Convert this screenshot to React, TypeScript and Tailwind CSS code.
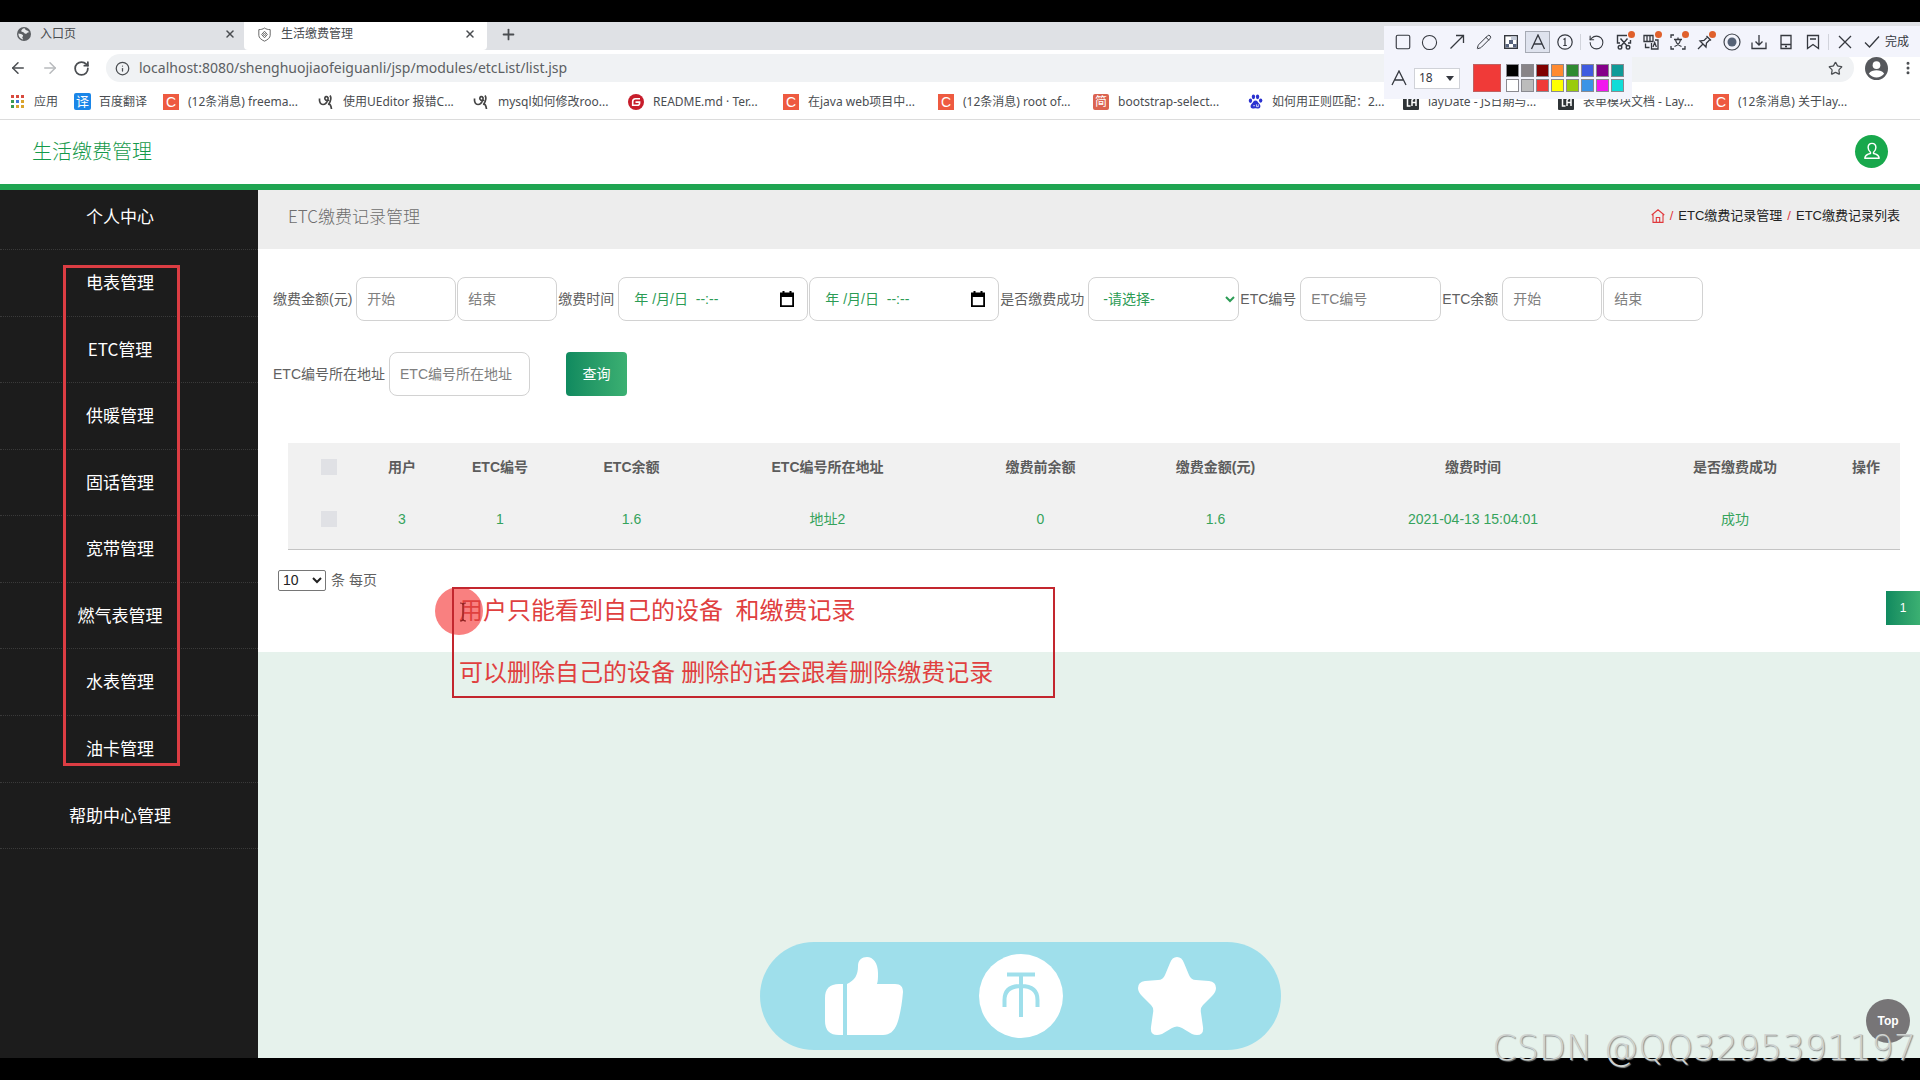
import type { ReactNode } from "react";
import {
  ArrowLeft,
  ArrowRight,
  Circle,
  Info,
  MoreVertical,
  Pencil,
  Plus,
  RotateCcw,
  RotateCw,
  Square,
  Star,
  X,
} from "lucide-react";

const uiFont = "font-['Noto_Sans','Noto_Sans_CJK_SC',sans-serif]";
const pageFont = "font-['Liberation_Sans','Noto_Sans_CJK_SC',sans-serif]";
const cjkFont = "font-['Noto_Sans_CJK_SC',sans-serif]";

const menuItems = [
  "电表管理",
  "ETC管理",
  "供暖管理",
  "固话管理",
  "宽带管理",
  "燃气表管理",
  "水表管理",
  "油卡管理",
  "帮助中心管理",
];

const columns = [
  { title: "用户", value: "3", width: 64 },
  { title: "ETC编号", value: "1", width: 132 },
  { title: "ETC余额", value: "1.6", width: 131 },
  { title: "ETC编号所在地址", value: "地址2", width: 261 },
  { title: "缴费前余额", value: "0", width: 165 },
  { title: "缴费金额(元)", value: "1.6", width: 185 },
  { title: "缴费时间", value: "2021-04-13 15:04:01", width: 330 },
  { title: "是否缴费成功", value: "成功", width: 194 },
  { title: "操作", value: "", width: 68 },
];

const palette = [
  "#000000", "#888488", "#800000", "#ff8a30", "#2f8a32", "#3f5be0", "#84008a", "#109a98",
  "#ffffff", "#bcbcbc", "#f03a38", "#ffff00", "#9acb0c", "#3a94e6", "#f216ee", "#10dcd8",
];

function GlobeIcon() {
  return (
    <svg viewBox="0 0 16 16" className="size-[14px]">
      <circle cx="8" cy="8" r="8" fill="#5a5d61" />
      <path d="M8 1.500c2 .2 1 2 2.500 2.200 1.500.3 2.800 1.300 3.800 2.500-1.200-.3-2.300 0-3 .8-1 1.200-2.600.8-3.300-.3C7.300 5.400 5.800 6 5 5.200 4.300 4.300 6 2 8 1.500zM1.600 7.500c1.700.1 4.400.5 5.200 2 .6 1.300-.9 1.500-.8 2.600.1.900 1.200 1.300 1 2.200C4 14 1.500 11 1.600 7.500z" fill="#e6e8ea" />
    </svg>
  );
}

function ShieldIcon() {
  return (
    <svg viewBox="0 0 16 18" className="h-[15px] w-[13px]" fill="none" stroke="#666" strokeWidth="1.200">
      <path d="M8 1c2 1.500 4.500 2 7 2v7c0 3-3 5.500-7 7.200C4 15.500 1 13 1 10V3c2.500 0 5-.5 7-2z" />
      <path d="M8 5l3.500 4L8 13 4.500 9z" />
      <circle cx="8" cy="9" r="1.200" />
    </svg>
  );
}

function CsdnIcon() {
  return (
    <span className="flex size-4 items-center justify-center bg-[#ee5a40] font-['Liberation_Sans',sans-serif] text-sm leading-4 text-white">
      C
    </span>
  );
}

function CobraIcon() {
  return (
    <svg viewBox="0 0 16 16" className="size-4" fill="none" stroke="#444" strokeWidth="1.700">
      <path d="M1.500 4.500c-.3 3.500 1 6 3.500 6S9 8.500 10 5.500C10.800 3 8 1.500 7 3.500S8.500 7.500 11 6M12 1.500c1.500 2 .5 6-1.500 9M10 10.500c2-1 3 1 3.500 4.500" />
    </svg>
  );
}

function GiteeIcon() {
  return (
    <svg viewBox="0 0 16 16" className="size-4">
      <circle cx="8" cy="8" r="8" fill="#c71d2b" />
      <path d="M12 4.700H7.500a2.800 2.800 0 0 0-2.800 2.800v3.800h4.600a2.300 2.300 0 0 0 2.300-2.300v-.9H7.500" fill="none" stroke="#fff" strokeWidth="1.600" />
    </svg>
  );
}

function JianIcon() {
  return (
    <span className="flex size-4 items-center justify-center rounded-xs bg-[#db6350] text-[12px] leading-4 text-white">
      简
    </span>
  );
}

function PawIcon() {
  return (
    <svg viewBox="0 0 16 16" className="size-[15px]" fill="#2b32d0">
      <ellipse cx="2.600" cy="7.200" rx="1.800" ry="2.300" />
      <ellipse cx="5.800" cy="3" rx="1.800" ry="2.600" />
      <ellipse cx="10.200" cy="3" rx="1.800" ry="2.600" />
      <ellipse cx="13.500" cy="7" rx="1.800" ry="2.300" />
      <path d="M8 7c2 0 2.500 2 4 3.500 2 2 1.500 5-1 5-1.200 0-1.800-.4-3-.4s-1.800.4-3 .4c-2.500 0-3-3-1-5C5.500 9 6 7 8 7z" />
      <path d="M5.500 12.500h2m1.500-1.500v2.500h2V11" stroke="#fff" strokeWidth=".8" fill="none" />
    </svg>
  );
}

function LayIcon() {
  return (
    <svg viewBox="0 0 16 16" className="size-4">
      <rect width="16" height="16" rx="1" fill="#2f3437" />
      <path d="M4.500 3v9h3M9 12V6l2-2h2v8M9 8.500h4" stroke="#fff" strokeWidth="1.500" fill="none" />
    </svg>
  );
}

const bookmarks: { icon: ReactNode; title: string }[] = [
  { icon: <CsdnIcon />, title: "(12条消息) freema..." },
  { icon: <CobraIcon />, title: "使用UEditor 报错C..." },
  { icon: <CobraIcon />, title: "mysql如何修改roo..." },
  { icon: <GiteeIcon />, title: "README.md · Ter..." },
  { icon: <CsdnIcon />, title: "在java web项目中..." },
  { icon: <CsdnIcon />, title: "(12条消息) root of..." },
  { icon: <JianIcon />, title: "bootstrap-select..." },
  { icon: <PawIcon />, title: "如何用正则匹配：2..." },
  { icon: <LayIcon />, title: "layDate - JS日期与..." },
  { icon: <LayIcon />, title: "表单模块文档 - Lay..." },
  { icon: <CsdnIcon />, title: "(12条消息) 关于lay..." },
];

function AppsIcon() {
  const colors = ["#d94a3e", "#d94a3e", "#d94a3e", "#3c9a52", "#3f78d8", "#d9a42c", "#3c9a52", "#d9a42c", "#d9a42c"];
  return (
    <span className="grid grid-cols-3 gap-[2px]">
      {colors.map((color, i) => (
        <span key={i} className="size-[3px]" style={{ backgroundColor: color }} />
      ))}
    </span>
  );
}

function Browser() {
  return (
    <div className={`${uiFont} text-xs text-[#4a4d51]`}>
      <div className="flex h-7 bg-[#dfe1e5]">
        <div className="flex w-[244px] items-center pr-[5px] pb-1 pl-[17px]">
          <GlobeIcon />
          <span className="ml-[9px] flex-1">入口页</span>
          <button aria-label="关闭入口页" className="p-[3px]">
            <X size={12} strokeWidth={3} />
          </button>
        </div>
        <div className="flex w-[243px] items-center rounded-b-sm bg-white pr-2 pb-1 pl-[14px]">
          <ShieldIcon />
          <span className="ml-[10px] flex-1">生活缴费管理</span>
          <button aria-label="关闭生活缴费管理" className="p-[3px]">
            <X size={12} strokeWidth={3} />
          </button>
        </div>
        <button aria-label="新标签页" className="px-[13px] pb-1">
          <Plus size={17} strokeWidth={2.5} />
        </button>
      </div>

      <div className="flex h-9 items-center bg-white pl-[9px]">
        <button aria-label="后退" className="mr-[14px]"><ArrowLeft size={18} /></button>
        <button aria-label="前进" className="mr-[14px] text-[#b8babd]"><ArrowRight size={18} /></button>
        <button aria-label="刷新"><RotateCw size={17} strokeWidth={2.5} /></button>
        <div className="ml-4 flex h-7 flex-1 items-center rounded-full bg-[#f0f2f4] pr-[11px] pl-[9px]">
          <Info size={15} />
          <input
            aria-label="网址"
            readOnly
            value="localhost:8080/shenghuojiaofeiguanli/jsp/modules/etcList/list.jsp"
            className="ml-[9px] flex-1 bg-transparent text-sm text-[#5c5f63] outline-none"
          />
          <button aria-label="收藏"><Star size={15} /></button>
        </div>
        <svg viewBox="0 0 24 24" className="mr-3 ml-[11px] size-[23px]">
          <circle cx="12" cy="12" r="12" fill="#56585c" />
          <circle cx="12" cy="8.500" r="4" fill="#fff" />
          <path d="M4 17.500C5.500 14.500 9 13.700 12 13.700s6.500.8 8 3.800c-2 2.500-5 4-8 4s-6-1.500-8-4z" fill="#fff" />
        </svg>
        <button aria-label="更多" className="mr-1"><MoreVertical size={16} strokeWidth={2.5} /></button>
      </div>

      <nav className="flex h-[34px] items-center overflow-hidden border-b border-[#dcdcdc] bg-white pb-[2px] pl-[11px] whitespace-nowrap">
        <a href="#apps" className="flex w-[63px] items-center gap-[10px]">
          <AppsIcon />
          应用
        </a>
        <a href="#fanyi" className="flex w-[89px] items-center gap-2">
          <span className="flex size-[17px] items-center justify-center rounded-xs bg-[#1a86e8] text-[13px] leading-none text-white">
            译
          </span>
          百度翻译
        </a>
        {bookmarks.map((bookmark, i) => (
          <a key={i} href="#bookmark" className="flex w-[155px] shrink-0 items-center gap-[9px]">
            {bookmark.icon}
            {bookmark.title}
          </a>
        ))}
      </nav>
    </div>
  );
}

function ToolCell({ label, badge, active, children }: { label: string; badge?: boolean; active?: boolean; children: ReactNode }) {
  return (
    <button
      aria-label={label}
      className={`relative flex h-5 w-[23px] items-center justify-center ${active ? "bg-[#dfe3ee] outline outline-[#a6aab4]" : ""}`}
    >
      {children}
      {badge && <span className="absolute -top-px right-0 size-[7px] rounded-full bg-[#e0602c]" />}
    </button>
  );
}

function ToolIcon({ d }: { d: string }) {
  return (
    <svg viewBox="0 0 16 16" className="size-4" fill="none" stroke="#35383f" strokeWidth="1.300">
      <path d={d} />
    </svg>
  );
}

function CaptureToolbar() {
  return (
    <div className={`absolute top-[26px] right-0 ${uiFont} text-[#35383f]`}>
      <div className="flex h-[31px] w-[536px] items-center gap-1 bg-[#f3f4fc] pt-px pl-[7px]">
        <ToolCell label="矩形"><Square size={18} strokeWidth={1.5} /></ToolCell>
        <ToolCell label="椭圆"><Circle size={17} strokeWidth={1.5} /></ToolCell>
        <ToolCell label="箭头"><ToolIcon d="M1.500 14.500L14.500 1.500M7 1.500h7.500V9" /></ToolCell>
        <ToolCell label="画笔"><Pencil size={16} strokeWidth={1.5} /></ToolCell>
        <ToolCell label="马赛克">
          <svg viewBox="0 0 14 14" className="size-[14px]">
            <rect x=".7" y=".7" width="12.600" height="12.600" fill="#fff" stroke="#35383f" strokeWidth="1.400" />
            <path d="M7 1.400h5.600V5H7z" fill="#c3cad8" />
            <path d="M5 5h4v4H5zM1.400 9H5v3.600H1.400zM9 9h3.600v3.600H9z" fill="#56627c" />
          </svg>
        </ToolCell>
        <ToolCell label="文字" active><ToolIcon d="M1.500 15L8 1l6.500 14M4 10h8" /></ToolCell>
        <ToolCell label="序号">
          <svg viewBox="0 0 16 16" className="size-4" fill="none" stroke="#35383f" strokeWidth="1.200">
            <circle cx="8" cy="8" r="7.200" />
            <path d="M6.500 5.500L8 4.500v7M6.300 11.500h3.500" />
          </svg>
        </ToolCell>
        <span className="h-4 w-px bg-[#d2d4dc]" />
        <ToolCell label="撤销"><RotateCcw size={17} strokeWidth={1.5} /></ToolCell>
        <ToolCell label="截图" badge>
          <svg viewBox="0 0 16 16" className="size-4" fill="none" stroke="#35383f" strokeWidth="1.400">
            <path d="M4 9H1.500V1.500H11M14.500 6v3H12M4.500 4.500l6.500 7.500M11.500 4.500L5 12" />
            <circle cx="4" cy="13.300" r="1.800" />
            <circle cx="12" cy="13.300" r="1.800" />
          </svg>
        </ToolCell>
        <ToolCell label="翻译" badge>
          <ToolIcon d="M1 1.500h9v6H1zM4 1.500v6M7 1.500v6M2.500 9.500v4h4M12 6h3v9H8.500V9M10 13l1.700-4.500 1.700 4.500" />
        </ToolCell>
        <ToolCell label="识别文字" badge>
          <ToolIcon d="M1 4V1h3M1 12v3h3M12 15h3v-3M4 5.500h8M8 3.500v2M10.500 5.500C10 9 7.500 11.500 4.500 12.500M5.500 5.500c.5 3.500 3 6 6 7" />
        </ToolCell>
        <ToolCell label="贴图" badge>
          <ToolIcon d="M9.500 2l4.500 4.500M10.500 3L7 6.500 3 7l6 6 .5-4L13 5.500M6 10l-5 5" />
        </ToolCell>
        <ToolCell label="录屏">
          <svg viewBox="0 0 18 18" className="size-[18px]">
            <circle cx="9" cy="9" r="8" fill="none" stroke="#41454d" strokeWidth="1.200" />
            <circle cx="9" cy="9" r="4.500" fill="#566276" />
          </svg>
        </ToolCell>
        <ToolCell label="下载"><ToolIcon d="M8 1v10M4.500 7.500L8 11l3.500-3.500M1 8.500v6h14v-6" /></ToolCell>
        <ToolCell label="发送到手机"><ToolIcon d="M3 1.500h10v13H3zM3 10.500h10M7 12.500h2" /></ToolCell>
        <ToolCell label="收藏"><ToolIcon d="M2.500 1.500h11v13L8 10.500l-5.500 4zM5 5h6" /></ToolCell>
        <span className="h-4 w-px bg-[#d2d4dc]" />
        <ToolCell label="取消"><ToolIcon d="M2 2l12 12M14 2L2 14" /></ToolCell>
        <button className="ml-1 flex items-center gap-[5px] text-xs">
          <ToolIcon d="M1 8.500L5.500 13 15 2.500" />
          完成
        </button>
      </div>

      <div className="flex h-[42px] w-[248px] items-center bg-[#f3f4fc] pl-[7px]">
        <svg viewBox="0 0 16 16" className="size-4" fill="none" stroke="#35383f" strokeWidth="1.300" aria-hidden>
          <path d="M1 15L8 1l7 14M4 10h8" />
        </svg>
        <div className="relative ml-[7px] flex items-center">
          <select
            aria-label="字号"
            className="h-[21px] w-[46px] appearance-none border border-[#d0d2d8] bg-white pl-1 text-xs"
          >
            <option>18</option>
          </select>
          <span className="pointer-events-none absolute right-[6px] border-x-4 border-t-[5px] border-x-transparent border-t-[#35383f]" />
        </div>
        <button aria-label="当前颜色" className="ml-[13px] size-7 border border-[#c06060] bg-[#f03a38]" />
        <div className="ml-[5px] grid grid-cols-8 gap-x-[2px] gap-y-[2px]">
          {palette.map((color) => (
            <button
              key={color}
              aria-label={color}
              className="size-[13px] border border-[#8a8a90]"
              style={{ backgroundColor: color }}
            />
          ))}
        </div>
      </div>
    </div>
  );
}

function TextField({ id, placeholder, wide }: { id: string; placeholder: string; wide?: boolean }) {
  return (
    <input
      id={id}
      aria-label={placeholder}
      placeholder={placeholder}
      className={`h-11 rounded-lg border border-[#d2d2d2] bg-white px-[10px] placeholder:text-[#808080] ${wide ? "w-[141px]" : "w-[100px]"}`}
    />
  );
}

function DateField({ id, label }: { id: string; label: string }) {
  return (
    <div className="flex h-11 w-[190px] items-center rounded-lg border border-[#d2d2d2] bg-white pr-[13px] pl-[15px]">
      <input
        id={id}
        aria-label={label}
        defaultValue="年 /月/日  --:--"
        className="w-full min-w-0 bg-transparent text-[#2c9c55] outline-none"
      />
      <button type="button" aria-label="选择日期">
        <svg viewBox="0 0 14 16" className="h-4 w-[14px]">
          <path d="M2.500 0h2v1.500h5V0h2v1.500H14V16H0V1.500h2.500zM1.800 6v8.200h10.400V6z" fill="#000" fillRule="evenodd" />
        </svg>
      </button>
    </div>
  );
}

function Field({ id, label, children }: { id: string; label: string; children: ReactNode }) {
  return (
    <div className="flex items-center">
      <label htmlFor={id} className="mr-1">{label}</label>
      <div className="flex gap-px">{children}</div>
    </div>
  );
}

function SearchForm() {
  return (
    <form className="flex flex-wrap items-center gap-x-px gap-y-[31px] pt-7 pl-[15px] text-sm text-[#616161]">
      <Field id="feeStart" label="缴费金额(元)">
        <TextField id="feeStart" placeholder="开始" />
        <TextField id="feeEnd" placeholder="结束" />
      </Field>
      <Field id="timeStart" label="缴费时间">
        <DateField id="timeStart" label="开始时间" />
        <DateField id="timeEnd" label="结束时间" />
      </Field>
      <Field id="paid" label="是否缴费成功">
        <select id="paid" className="h-11 w-[151px] rounded-lg border border-[#d2d2d2] bg-white pl-[10px] text-[#2c9c55]">
          <option>-请选择-</option>
        </select>
      </Field>
      <Field id="etcNo" label="ETC编号">
        <TextField id="etcNo" placeholder="ETC编号" wide />
      </Field>
      <Field id="balanceStart" label="ETC余额">
        <TextField id="balanceStart" placeholder="开始" />
        <TextField id="balanceEnd" placeholder="结束" />
      </Field>
      <Field id="address" label="ETC编号所在地址">
        <TextField id="address" placeholder="ETC编号所在地址" wide />
      </Field>
      <button
        type="button"
        className="ml-[35px] h-11 w-[61px] rounded-sm bg-linear-to-r from-[#0f8a5f] to-[#3bb072] text-white"
      >
        查询
      </button>
    </form>
  );
}

function RecordTable() {
  const box = "block mx-auto size-4 appearance-none bg-[#e0e1e5]";
  return (
    <div className="mt-[47px] pr-5 pl-[30px]">
      <table className="w-full table-fixed border-b border-[#c4c4c4] bg-[#f1f1f1] text-center text-sm">
        <colgroup>
          <col style={{ width: 82 }} />
          {columns.map((column) => (
            <col key={column.title} style={{ width: column.width }} />
          ))}
        </colgroup>
        <thead>
          <tr className="h-[47px] text-[#5c5c5c]">
            <th><input type="checkbox" aria-label="全选" className={box} /></th>
            {columns.map((column) => (
              <th key={column.title} className="font-bold whitespace-nowrap">{column.title}</th>
            ))}
          </tr>
        </thead>
        <tbody>
          <tr className="h-[59px] text-[#35a35c]">
            <td><input type="checkbox" aria-label="选择记录" className={box} /></td>
            {columns.map((column) => (
              <td key={column.title}>{column.value}</td>
            ))}
          </tr>
        </tbody>
      </table>
    </div>
  );
}

function Sidebar() {
  return (
    <aside className={`relative w-[258px] shrink-0 bg-[#1c1c1c] ${cjkFont} text-[17px] text-white`}>
      <a href="#center" className="flex h-[60px] items-center justify-center border-b border-dotted border-[#3a3a3a] pr-[18px] pb-2">
        个人中心
      </a>
      <nav className="flex h-[599px] flex-col">
        {menuItems.map((item) => (
          <a
            key={item}
            href="#menu"
            className="flex flex-1 items-center justify-center border-b border-dotted border-[#3a3a3a] pr-[18px] pb-[2px]"
          >
            {item}
          </a>
        ))}
      </nav>
      <div className="pointer-events-none absolute top-[75px] left-[63px] h-[501px] w-[117px] border-3 border-[#dc3d43]" />
    </aside>
  );
}

function LikePill() {
  return (
    <div className="absolute bottom-[30px] left-[760px] flex h-[108px] w-[521px] items-center justify-between rounded-full bg-[#9fdfeb] px-[65px]">
      <svg viewBox="0 0 78 78" className="size-[78px]" fill="#fff">
        <path d="M14 27h4v51h-4Q0 78 0 64V41Q0 27 14 27z" />
        <path d="M22 27c8-4 11-9 11-18 0-6 4-9 9-9 6 0 11 6 11 16 0 5 0 8-1 11h18c6 0 8 3 8 8-1 12-3 24-6 32-3 7-7 11-14 11H22z" />
      </svg>
      <svg viewBox="0 0 84 84" className="size-[84px]">
        <circle cx="42" cy="42" r="42" fill="#fff" />
        <path d="M28 20.500h28M42 20.500V63M25.500 53V46q0-14 16.500-14t16.500 14v7" fill="none" stroke="#9fdfeb" strokeWidth="4" />
      </svg>
      <svg viewBox="0 0 78 78" className="size-[78px]" fill="#fff">
        <path d="M39 0q5 0 7 6l5 12q2 5 7 5l13 1q7 1 7 7 0 4-4 8l-9 9q-3 3-2 8l2 14q1 8-6 8-3 0-5-1l-10-6q-5-3-10 0l-10 6q-3 1-5 1-7 0-6-8l2-14q1-5-2-8l-9-9q-4-4-4-8 0-6 7-7l13-1q5 0 7-5l5-12q2-6 7-6z" />
      </svg>
    </div>
  );
}

export default function App() {
  return (
    <div className="relative flex h-screen flex-col overflow-hidden bg-black py-[22px]">
      <Browser />

      <header className="flex h-[70px] shrink-0 items-center justify-between border-b-6 border-[#1fa552] bg-white pr-8 pb-[2px] pl-8">
        <h1 className={`${cjkFont} text-xl font-light text-[#15994a]`}>生活缴费管理</h1>
        <button aria-label="用户" className="flex size-[33px] items-center justify-center rounded-full bg-[#18a84c]">
          <svg viewBox="0 0 20 20" className="size-[18px]" fill="none" stroke="#fff" strokeWidth="1.600" strokeLinejoin="round">
            <path d="M10 1.500c2.800 0 4.300 2 4.300 4.700 0 2.200-1 4-2.600 5.200v1.300c3.300.5 5.800 2 6.300 5.300H2c.5-3.300 3-4.800 6.300-5.300v-1.300C6.700 10.200 5.700 8.400 5.700 6.200c0-2.700 1.500-4.700 4.300-4.700z" />
          </svg>
        </button>
      </header>

      <div className="flex min-h-0 flex-1">
        <Sidebar />
        <main className={`min-w-0 flex-1 bg-[#e6f2ec] ${pageFont}`}>
          <div className="flex h-[59px] items-center justify-between bg-[#ededed] pr-5 pb-[7px] pl-[30px]">
            <h2 className={`${cjkFont} text-[17px] font-light text-[#6e6e6e]`}>ETC缴费记录管理</h2>
            <nav className="flex items-center gap-[5px] text-[13px] text-[#222]">
              <a href="#home" aria-label="首页">
                <svg viewBox="0 0 14 14" className="size-[14px]" fill="none" stroke="#e0383c" strokeWidth="1.100">
                  <path d="M.7 6L7 .8 13.300 6M2 5v8.400h10V5M5.300 13V8.500h3.400V13" />
                </svg>
              </a>
              <span className="text-[#e0383c]">/</span>
              <a href="#records">ETC缴费记录管理</a>
              <span className="text-[#e0383c]">/</span>
              <span>ETC缴费记录列表</span>
            </nav>
          </div>

          <section className="bg-white pb-[27px]">
            <SearchForm />
            <RecordTable />
            <div className="mt-5 flex items-center gap-[5px] pl-5 text-sm text-[#616161]">
              <select id="pageSize" className="h-[21px] w-12 rounded-xs border border-[#767676] bg-white text-sm text-[#222]">
                <option>10</option>
              </select>
              <label htmlFor="pageSize">条 每页</label>
            </div>
            <div className="flex justify-end">
              <button className="h-[34px] w-[34px] bg-linear-to-r from-[#0f8a5f] to-[#3bb072] text-xs text-white">1</button>
            </div>
          </section>
        </main>
      </div>

      <div className="absolute top-[587px] left-[435px] size-12 rounded-full bg-[#f98080]" />
      <div className={`absolute top-[587px] left-[452px] h-[111px] w-[603px] border-2 border-[#c3262e] pl-[5px] ${uiFont} text-2xl leading-[42px] whitespace-pre text-[#e0403f]`}>
        <p>用户只能看到自己的设备{"  "}和缴费记录</p>
        <p className="mt-5">可以删除自己的设备 删除的话会跟着删除缴费记录</p>
      </div>
      <svg viewBox="0 0 8 20" className="absolute top-[602px] left-[459px] h-5 w-2" fill="none" stroke="#8c2020" strokeWidth="1.200">
        <path d="M1 1q3 0 3 2v14q0 2-3 2M7 1Q4 1 4 3M7 19q-3 0-3-2" />
      </svg>

      <LikePill />

      <button className={`absolute right-[10px] bottom-[37px] size-11 rounded-full bg-[#777577] text-xs font-bold text-white ${pageFont}`}>
        Top
      </button>
      <CaptureToolbar />
      <p className="absolute right-1 bottom-3 font-['DejaVu_Sans',sans-serif] text-[35px] leading-10 font-extralight whitespace-nowrap text-[#cfd3d1] [text-shadow:1px_1px_1px_#8c908e]">
        CSDN @QQ3295391197
      </p>
    </div>
  );
}
